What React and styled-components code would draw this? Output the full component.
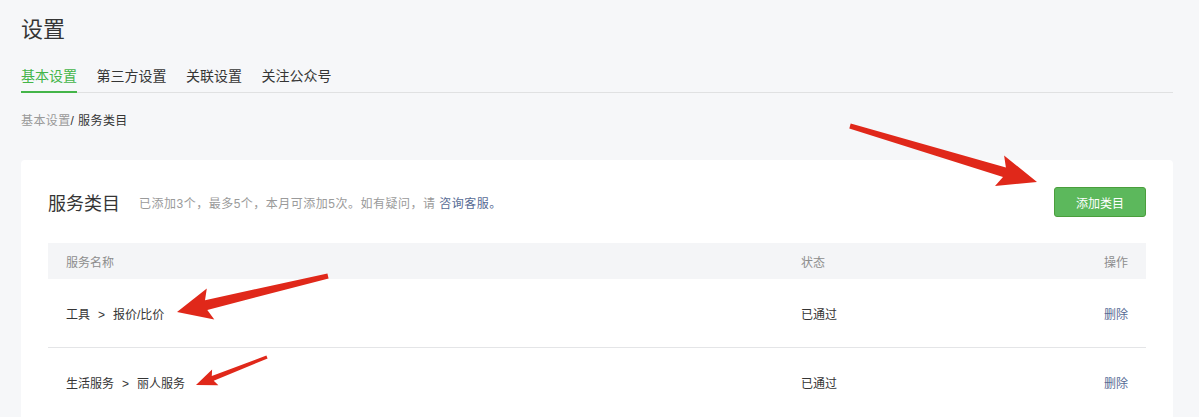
import React from "react";
import styled, { createGlobalStyle } from "styled-components";

const GlobalStyle = createGlobalStyle`
  html, body {
    margin: 0;
    padding: 0;
    background: #f6f7f9;
    font-family: "Liberation Sans", "Noto Sans CJK SC", sans-serif;
    color: #353535;
    text-spacing-trim: space-all;
  }
`;

const Page = styled.div`
  position: relative;
  width: 1152px;
  padding: 0 0 0 21px;
  height: 417px;
  overflow: hidden;
`;

const PageTitle = styled.h2`
  margin: 0;
  padding-top: 14px;
  font-size: 22px;
  font-weight: 400;
  line-height: 32px;
  color: #353535;
`;

const Tabs = styled.div`
  display: flex;
  gap: 19.5px;
  margin-top: 20px;
  border-bottom: 1px solid #e0e1e2;
`;

const Tab = styled.div`
  font-size: 14px;
  line-height: 20px;
  padding-bottom: 5px;
  color: ${(p) => (p.active ? "#44b549" : "#353535")};
  border-bottom: 2px solid ${(p) => (p.active ? "#44b549" : "transparent")};
  margin-bottom: -1px;
`;

const Crumbs = styled.div`
  margin-top: 19px;
  font-size: 12px;
  line-height: 18px;
  letter-spacing: 0.4px;
  color: #9a9a9a;

  span {
    color: #353535;
  }
`;

const Card = styled.div`
  margin-top: 30px;
  background: #fff;
  border-radius: 4px;
  padding: 27px 27px 20px;
`;

const CardHead = styled.div`
  display: flex;
  align-items: center;
  height: 30px;
`;

const CardTitle = styled.h3`
  margin: 0;
  font-size: 18px;
  font-weight: 400;
  color: #353535;
`;

const Tip = styled.p`
  margin: 0 0 0 19px;
  font-size: 12px;
  letter-spacing: 0.5px;
  color: #9a9a9a;
  flex: 1;

  a {
    color: #576b95;
    text-decoration: none;
  }
`;

const AddButton = styled.button`
  width: 92px;
  height: 30px;
  border: 1px solid #4a9e3c;
  border-radius: 3px;
  background: #5cb85c;
  color: #fff;
  font-family: inherit;
  font-size: 12px;
  cursor: pointer;
`;

const Table = styled.div`
  margin-top: 26px;
`;

const Row = styled.div`
  display: grid;
  grid-template-columns: 735px 1fr 80px;
  align-items: center;
  height: ${(p) => (p.head ? "36px" : "68px")};
  padding: 0 18px;
  font-size: 12px;
  color: ${(p) => (p.head ? "#8d8d8d" : "#353535")};
  background: ${(p) => (p.head ? "#f4f5f7" : "transparent")};
  border-bottom: ${(p) => (p.line ? "1px solid #e4e5e7" : "none")};
`;

const Op = styled.div`
  text-align: right;
  color: ${(p) => (p.link ? "#576b95" : "inherit")};
`;

const Sep = styled.span`
  margin: 0 8px;
`;

const Overlay = styled.svg`
  position: absolute;
  left: 0;
  top: 0;
  pointer-events: none;
`;

function arrowPoints(tx, ty, px, py, tailW, shaftW, headLen, headW) {
  const len = Math.hypot(px - tx, py - ty);
  const dx = (px - tx) / len;
  const dy = (py - ty) / len;
  const nx = -dy;
  const ny = dx;
  const bx = px - dx * headLen;
  const by = py - dy * headLen;
  const cx = px - dx * headLen * 1.15;
  const cy = py - dy * headLen * 1.15;
  const pts = [
    [tx + (nx * tailW) / 2, ty + (ny * tailW) / 2],
    [bx + (nx * shaftW) / 2, by + (ny * shaftW) / 2],
    [cx + (nx * headW) / 2, cy + (ny * headW) / 2],
    [px, py],
    [cx - (nx * headW) / 2, cy - (ny * headW) / 2],
    [bx - (nx * shaftW) / 2, by - (ny * shaftW) / 2],
    [tx - (nx * tailW) / 2, ty - (ny * tailW) / 2],
  ];
  return pts.map((p) => p.map((v) => v.toFixed(1)).join(",")).join(" ");
}

const arrows = [
  [850, 126, 1037, 182, 5, 10, 34, 32],
  [328, 276, 177, 312, 5, 10, 30, 32],
  [267, 357, 196, 385, 3, 5, 18, 17],
];

const rows = [
  { cat: "工具", sub: "报价/比价" },
  { cat: "生活服务", sub: "丽人服务" },
];

export default function App() {
  return (
    <>
      <GlobalStyle />
      <Page>
        <PageTitle>设置</PageTitle>
        <Tabs>
          <Tab active>基本设置</Tab>
          <Tab>第三方设置</Tab>
          <Tab>关联设置</Tab>
          <Tab>关注公众号</Tab>
        </Tabs>
        <Crumbs>
          基本设置<span>/ 服务类目</span>
        </Crumbs>
        <Card>
          <CardHead>
            <CardTitle>服务类目</CardTitle>
            <Tip>
              已添加3个，最多5个，本月可添加5次。如有疑问，请 <a href="#">咨询客服。</a>
            </Tip>
            <AddButton>添加类目</AddButton>
          </CardHead>
          <Table>
            <Row head>
              <div>服务名称</div>
              <div>状态</div>
              <Op>操作</Op>
            </Row>
            {rows.map((r, i) => (
              <Row key={i} line={i < rows.length - 1}>
                <div>
                  {r.cat}
                  <Sep>&gt;</Sep>
                  {r.sub}
                </div>
                <div>已通过</div>
                <Op link>删除</Op>
              </Row>
            ))}
          </Table>
        </Card>
        <Overlay width="1199" height="417">
          {arrows.map((a, i) => (
            <polygon key={i} points={arrowPoints(...a)} fill="#e0281a" />
          ))}
        </Overlay>
      </Page>
    </>
  );
}
